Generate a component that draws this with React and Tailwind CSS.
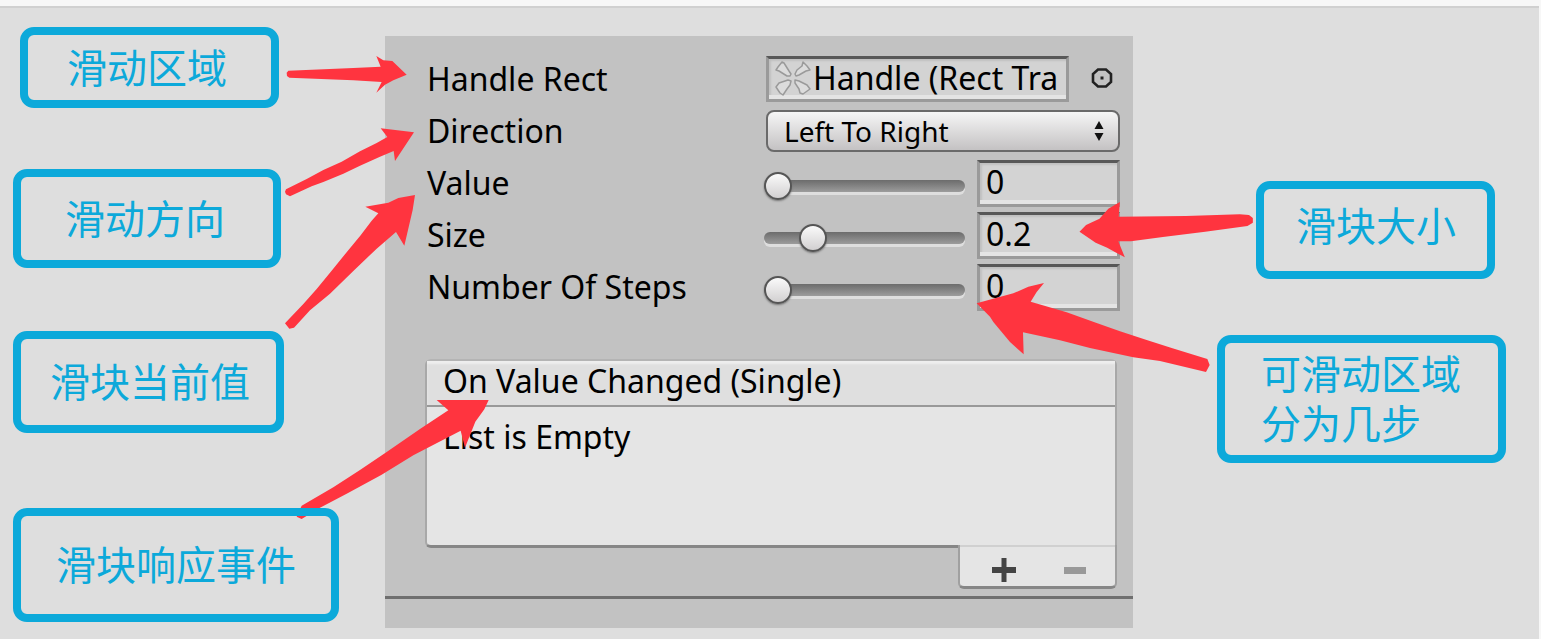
import React from "react";

const fieldBox =
  "border-t-3 border-x-3 border-b-3 border-t-[#585858] border-x-[#9a9a9a] border-b-[#9a9a9a] bg-[#d3d3d3] shadow-[inset_0_-4px_0_#e4e4e4,inset_2px_2px_2px_#c0c0c0]";

const calloutBox =
  "flex items-center rounded-[14px] border-8 border-[#0ca9da] text-[40px] leading-[50px] text-[#0ca9da]";

function Row({ label, htmlFor, children }) {
  return (
    <div className="flex h-[52px] items-center">
      <label htmlFor={htmlFor} className="w-[339px] shrink-0 whitespace-nowrap">
        {label}
      </label>
      <div className="flex min-w-0 flex-1 items-center">{children}</div>
    </div>
  );
}

function SliderRow({ label, id, value, max, step }) {
  const [current, setCurrent] = React.useState(value);
  const update = (e) => setCurrent(e.target.value);
  return (
    <Row label={label} htmlFor={id}>
      <input
        type="range"
        aria-label={label + " slider"}
        min="0"
        max={max}
        step={step}
        value={current}
        onChange={update}
        className="mt-1.5 -ml-0.5 h-8 min-w-0 flex-1 appearance-none bg-transparent [&::-webkit-slider-runnable-track]:h-3 [&::-webkit-slider-runnable-track]:rounded-full [&::-webkit-slider-runnable-track]:bg-linear-to-b [&::-webkit-slider-runnable-track]:from-[#6c6c6c] [&::-webkit-slider-runnable-track]:to-[#9c9c9c] [&::-webkit-slider-runnable-track]:shadow-[0_3px_0_#dedede] [&::-webkit-slider-thumb]:-mt-2 [&::-webkit-slider-thumb]:size-7 [&::-webkit-slider-thumb]:appearance-none [&::-webkit-slider-thumb]:rounded-full [&::-webkit-slider-thumb]:border-2 [&::-webkit-slider-thumb]:border-[#555] [&::-webkit-slider-thumb]:bg-linear-to-b [&::-webkit-slider-thumb]:from-[#fafafa] [&::-webkit-slider-thumb]:to-[#d2d0d1] [&::-webkit-slider-thumb]:shadow-[0_1px_2px_#777]"
      />
      <input
        id={id}
        type="text"
        value={current}
        onChange={update}
        className={"ml-3 h-[47px] w-[143px] pb-1 pl-1.5 " + fieldBox}
      />
    </Row>
  );
}

function Inspector() {
  return (
    <section className="flex flex-col bg-[#c2c2c2] text-[32px] leading-10 text-black">
      <div className="pt-[17px] pr-[13px] pl-[42px]">
        <Row label="Handle Rect" htmlFor="handle">
          <button
            id="handle"
            type="button"
            className={"flex h-[46px] min-w-0 flex-1 items-center overflow-hidden pb-0.5 pl-1.5 whitespace-nowrap " + fieldBox}
          >
            <svg viewBox="0 0 36 36" className="size-9 shrink-0" fill="#dcdcdc" stroke="#9a9a9a" strokeWidth="1.5" strokeLinejoin="round">
              <path d="M1 10 3 7 7 2 9 3 14 11 16 14 15 16H12L4 11Z" />
              <path d="M35 10 32 6 28 2 27 6 22 10 20 14 21 16 24 15 31 11Z" />
              <path d="M1 27 4 23 13 20 16 21 15 25 12 29 8 35 5 33Z" />
              <path d="M35 29 32 25 24 21 20 20V23L24 29 25 33 28 34Z" />
            </svg>
            <span className="ml-0.5">Handle (Rect Tra</span>
          </button>
          <button type="button" aria-label="Select object" className="flex h-10 w-[51px] justify-end pr-1.5">
            <svg viewBox="0 0 24 24" className="mt-[7px] size-6" fill="none" stroke="#222">
              <path d="M8 3.500H16L21 8V16L16 20.500H8L3 16V8Z" strokeWidth="2.6" />
              <rect x="10.5" y="10.5" width="3" height="3" fill="#222" stroke="none" />
            </svg>
          </button>
        </Row>
        <Row label="Direction" htmlFor="direction">
          <div className="relative flex-1">
            <select
              id="direction"
              className="block h-[42px] w-full appearance-none rounded-lg border-2 border-[#6a6a6a] bg-linear-to-b from-[#f6f6f6] to-[#c4c2c3] pl-4 text-[28px] leading-9"
            >
              <option>Left To Right</option>
              <option>Right To Left</option>
              <option>Bottom To Top</option>
              <option>Top To Bottom</option>
            </select>
            <svg viewBox="0 0 10 20" className="pointer-events-none absolute top-[11px] right-4 h-5 w-2.5" fill="#111">
              <path d="M5 0 9.500 8H.5ZM5 20 9.500 12H.5Z" />
            </svg>
          </div>
        </Row>
        <SliderRow label="Value" id="value" value="0" max="1" step="0.01" />
        <SliderRow label="Size" id="size" value="0.2" max="1" step="0.01" />
        <SliderRow label="Number Of Steps" id="steps" value="0" max="11" step="1" />
      </div>

      <div className="mt-[46px] mr-4 ml-[40px]">
        <div className="rounded-t-md rounded-bl-md border-x-2 border-t-2 border-b-3 border-x-[#a8a8a8] border-t-[#b4b4b4] border-b-[#868686] bg-[#e5e5e5]">
          <h2 className="border-b-2 border-[#999] bg-[#dfdfdf] pb-1 pl-4 font-normal shadow-[inset_0_3px_2px_#eee]">
            On Value Changed (Single)
          </h2>
          <p className="min-h-[138px] pt-[10px] pl-4">List is Empty</p>
        </div>
        <div className="relative -mt-[3px] ml-auto flex h-11 w-[159px] items-center rounded-b-md border-x-2 border-b-3 border-x-[#a0a0a0] border-b-[#868686] bg-[#e5e5e5] shadow-[inset_0_2px_0_#d0d0d0]">
          <button type="button" aria-label="Add" className="flex flex-1 justify-center pt-2 pl-2">
            <svg viewBox="0 0 24 24" className="size-6" fill="#444">
              <path d="M9.500 0H14.500V9H24V15H14.500V24H9.500V15H0V9H9.500Z" />
            </svg>
          </button>
          <button type="button" aria-label="Remove" className="flex flex-1 justify-center pt-2 pr-1">
            <svg viewBox="0 0 24 24" className="size-6" fill="#999">
              <path d="M1 9H23V16H1Z" />
            </svg>
          </button>
        </div>
      </div>
      <div className="mt-[7px] h-8 border-t-3 border-[#6f6f6f]" />
    </section>
  );
}

function Arrows() {
  return (
    <svg
      viewBox="0 0 1541 639"
      preserveAspectRatio="none"
      className="pointer-events-none absolute inset-0 h-full w-full"
      fill="#ff343f"
      strokeLinejoin="round"
      aria-hidden="true"
    >
      <g transform="scale(.33333)">
        <path d="M865 212 1060 204 1142 200 1129 168 1150 181 1177 183 1220 224 1180 241 1155 254 1129 278 1145 246 1060 241 868 233 861 228 860 218Z" />
      </g>
      <g transform="translate(280 110) scale(.33333)">
        <path d="M18 238 80 207 130 180 185 155 240 124 290 99 322 81 302 55 402 67 345 153 341 123 300 140 240 167 190 191 130 216 95 229 30 259 18 253 15 245Z" />
        <path d="M15 640 70 582 110 537 150 488 195 433 242 376 275 332 295 310 256 290 325 278 355 264 405 255 398 300 373 407 348 366 290 416 220 483 150 551 90 601 42 653 28 656Z" />
      </g>
      <g transform="translate(0 320) scale(.33333)">
        <path d="M905 557 1000 502 1080 450 1160 396 1260 327 1345 271 1310 240H1466L1453 268 1426 305 1395 383 1382 332 1240 406 1145 464 1040 521 960 563 905 597 890 590Z" />
      </g>
      <g transform="translate(960 270) scale(.33333)">
        <path d="M50 100 160 70 205 50 252 39 230 66 212 95 320 127 412 160 480 184 560 210 635 234 742 267 749 285 738 306 600 273 520 262 390 234 300 211 189 187 191 253 150 216 100 156 90 140Z" />
      </g>
      <g transform="translate(940 160) scale(.38432 .33333)">
        <path d="M363 215 380 195 415 176 438 146 468 126 465 170 640 168 780 163 804 165 814 174V188L800 198 690 215 580 231 497 244H464L481 292 455 276 435 263 405 248Z" />
      </g>
    </svg>
  );
}

export default function App() {
  return (
    <main
      lang="zh-CN"
      className="overflow-x-hidden border-t-6 border-r-2 border-[#f7f7f7] bg-[#dedede] font-['Noto_Sans','Noto_Sans_CJK_SC',sans-serif]"
    >
      <div className="relative -mt-1.5 -mr-0.5 grid min-h-screen grid-cols-[385fr_748fr_408fr] pt-9 pb-[11px]">
        <div className="pointer-events-none absolute top-1.5 right-0 left-0 h-0.5 bg-[#d0d0d0]" />
        <div className="-mt-[9px] flex flex-col items-start pl-[13px]">
          <div className={"ml-[7px] h-[81px] w-[259px] pl-[39px] " + calloutBox}>滑动区域</div>
          <div className={"mt-[61px] h-[99px] w-[268px] pl-11 " + calloutBox}>滑动方向</div>
          <div className={"mt-[63px] h-[102px] w-[271px] pl-[29px] " + calloutBox}>滑块当前值</div>
          <div className={"relative z-10 mt-[75px] h-[114px] w-[326px] pl-[35px] " + calloutBox}>滑块响应事件</div>
        </div>
        <Inspector />
        <div className="flex flex-col items-start pt-[145px] pl-[84px]">
          <div className={"ml-[39px] h-[98px] w-[239px] pb-2 pl-8 " + calloutBox}>滑块大小</div>
          <div className={"mt-14 h-[128px] w-[289px] pl-9 " + calloutBox}>
            <p>
              可滑动区域
              <br />
              分为几步
            </p>
          </div>
        </div>
        <Arrows />
      </div>
    </main>
  );
}
